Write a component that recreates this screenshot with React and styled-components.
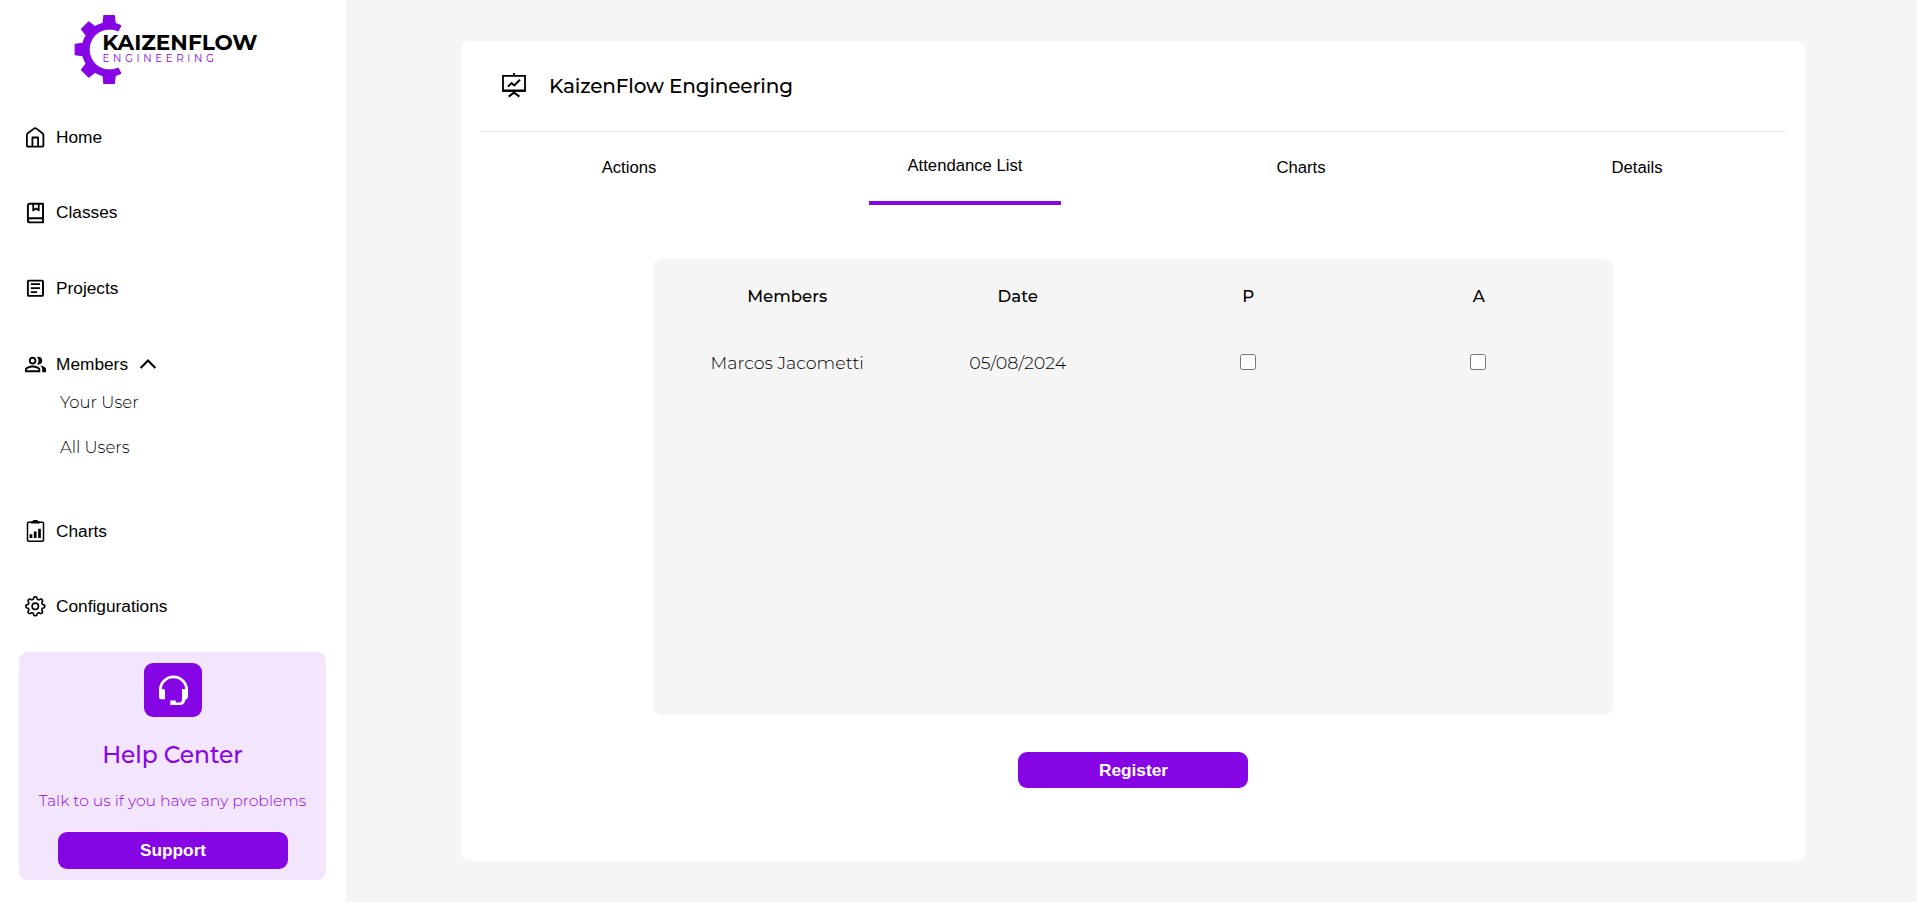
import React from "react";
import styled, { createGlobalStyle } from "styled-components";
import { MdOutlinePeopleAlt } from "react-icons/md";

const PURPLE = "#8605e5";
const LILAC = "#f3e5fc";
const GREY = "#f5f5f5";
const DISPLAY = `"Montserrat", "Inter", sans-serif`;

const GlobalStyle = createGlobalStyle`
  * { box-sizing: border-box; }
  body { margin: 0; background: ${GREY}; color: #000; font-family: "Liberation Sans", Arial, sans-serif; }
`;

const Page = styled.div`
  display: flex;
  width: 100%;
  height: 902px;
  overflow: hidden;
`;

const Sidebar = styled.aside`
  display: flex;
  flex-direction: column;
  flex: none;
  width: 346px;
  height: 100%;
  padding: 0 20px 22px 19px;
  background: #fff;
`;

const LogoSvg = styled.svg`
  display: block;
  flex: none;
  width: 200px;
  height: 90px;
  margin: 0 0 35px 51px;
`;

const LogoText = styled.text`
  font-family: ${DISPLAY};
  font-size: ${(p) => p.$size}px;
  font-weight: ${(p) => p.$weight};
  fill: ${(p) => p.$fill};
`;

const Nav = styled.nav`
  display: flex;
  flex-direction: column;
  padding-left: 5px;
`;

const NavRow = styled.a`
  display: flex;
  align-items: center;
  height: 24px;
  margin-bottom: ${(p) => p.$after}px;
  font-size: 17.3px;
  line-height: 24px;
`;

const NavLabel = styled.span`
  margin-left: 10px;
`;

const IconSvg = styled.svg`
  display: block;
  flex: none;
  fill: none;
  stroke: #000;
`;

const IconSlot = styled.span`
  display: flex;
  width: 22px;
  height: 24px;
  align-items: center;
  justify-content: center;
  svg { flex: none; }
`;

const ChevronSvg = styled(IconSvg)`
  margin-left: 11px;
`;

const SubMenu = styled.div`
  display: flex;
  flex-direction: column;
  gap: 21px;
  padding-left: 36px;
  margin-bottom: 60px;
`;

const SubItem = styled.a`
  font-family: ${DISPLAY};
  font-weight: 300;
  font-size: 16.5px;
  line-height: 24px;
`;

const HelpCard = styled.section`
  display: flex;
  flex-direction: column;
  align-items: center;
  width: 307px;
  height: 228px;
  margin-top: auto;
  padding-top: 11px;
  border-radius: 9px;
  background: ${LILAC};
  color: ${PURPLE};
  font-family: ${DISPLAY};
  white-space: nowrap;
`;

const HelpBadge = styled.div`
  width: 58px;
  height: 54px;
  border-radius: 9px;
  background: ${PURPLE};
`;

const HelpTitle = styled.h2`
  margin: 22px 0 0;
  font-size: 23.4px;
  font-weight: 500;
  line-height: 32px;
  letter-spacing: -0.1px;
`;

const HelpText = styled.p`
  margin: 18px 0 0;
  font-size: 15.6px;
  font-weight: 300;
  line-height: 24px;
`;

const Button = styled.button`
  width: 230px;
  height: ${(p) => p.$height}px;
  margin-top: ${(p) => p.$top}px;
  padding: 0 0 1px 1px;
  border: 0;
  border-radius: 9px;
  background: ${PURPLE};
  color: #fff;
  font: bold 17.3px/20px "Liberation Sans", Arial, sans-serif;
`;

const Main = styled.main`
  flex: 1;
  padding: 41px 112px 41px 115px;
`;

const Card = styled.section`
  display: flex;
  flex-direction: column;
  align-items: center;
  width: 1344px;
  height: 820px;
  border-radius: 9px;
  background: #fff;
`;

const CardHeader = styled.header`
  display: flex;
  align-items: center;
  width: 1306px;
  height: 91px;
  padding: 0 0 2px 21px;
  border-bottom: 1px solid ${LILAC};
`;

const CardTitle = styled.h1`
  margin: 0 0 0 22px;
  padding-top: 2px;
  font-family: ${DISPLAY};
  font-size: 20px;
  font-weight: 500;
  line-height: 28px;
  letter-spacing: -0.16px;
`;

const Tabs = styled.div`
  display: grid;
  grid-template-columns: repeat(4, 1fr);
  justify-items: center;
  width: 100%;
  height: 127px;
`;

const Tab = styled.button`
  width: 192px;
  height: 73px;
  padding: 0 0 2px;
  border: 0;
  border-bottom: ${(p) => (p.$active ? `4px solid ${PURPLE}` : "0")};
  background: none;
  color: #000;
  font: 16.7px/20px "Liberation Sans", Arial, sans-serif;
`;

const Table = styled.div`
  width: 960px;
  height: 456px;
  padding: 24px 19px;
  border-radius: 9px;
  background: ${GREY};
  font-family: ${DISPLAY};
`;

const TableRow = styled.div`
  display: grid;
  grid-template-columns: repeat(4, 1fr);
  justify-items: center;
  align-items: center;
  height: 26px;
  margin-bottom: 41px;
  font-size: ${(p) => (p.$head ? 16.6 : 17.5)}px;
  font-weight: ${(p) => (p.$head ? 500 : 300)};
`;

const Cell = styled.span`
  padding-bottom: ${(p) => (p.$raised ? 2 : 0)}px;
  white-space: nowrap;
`;

const Check = styled.input`
  width: 16px;
  height: 16px;
  margin: 0 1px 3px 0;
`;

const polar = (r, deg) => {
  const a = (deg * Math.PI) / 180;
  return [r * Math.sin(a), -r * Math.cos(a)];
};

const cogPath = () => {
  const pts = [];
  for (let d = 0; d < 360; d += 3) {
    const c = Math.cos((d * 8 * Math.PI) / 180);
    const r = 8.35 + 1.15 * Math.tanh(2 * c);
    const [x, y] = polar(r, d);
    pts.push(`${(11.3 + x).toFixed(2)} ${(12.3 + y).toFixed(2)}`);
  }
  return `M${pts.join("L")}Z`;
};

const Logo = () => (
  <LogoSvg viewBox="70 0 200 90">
    <g fill={PURPLE} stroke={PURPLE} strokeLinejoin="round">
      <path
        d="M121 25.6A26.8 26.8 0 1 0 121 73.4L118.2 68A20.4 20.4 0 1 1 118.2 31Z"
        strokeWidth="1"
      />
      {[0, -45, -90, -135, -180].map((deg) => (
        <path
          key={deg}
          d="M102.8 25L103.9 15.6H114.3L115.4 25Z"
          strokeWidth="1.2"
          transform={`rotate(${deg} 109.1 49.5)`}
        />
      ))}
    </g>
    <LogoText x="102.2" y="50.4" $size={21.6} $weight={700} $fill="#000" textLength="155.4" lengthAdjust="spacingAndGlyphs">
      KAIZENFLOW
    </LogoText>
    <LogoText x="102.4" y="62.3" $size={10.3} $weight={400} $fill={PURPLE} textLength="111.6">
      ENGINEERING
    </LogoText>
  </LogoSvg>
);

const Icon = ({ children, sw = 1.8 }) => (
  <IconSvg width="22" height="24" viewBox="0 0 22 24" strokeWidth={sw} strokeLinejoin="round">
    {children}
  </IconSvg>
);

const HomeIcon = () => (
  <Icon>
    <path d="M2.9 10.2Q2.9 9 3.8 8.3L10 3.6Q11.2 2.7 12.4 3.6L18.5 8.3Q19.4 9 19.4 10.2V20Q19.4 21.7 17.8 21.7H4.5Q2.9 21.7 2.9 20ZM8.4 21.7V12.5H14.1V21.7" />
  </Icon>
);

const BookIcon = () => (
  <Icon sw={1.9}>
    <path d="M6 3.7H19V22.4H6Q3.9 22.4 3.9 20.5V5.7Q3.9 3.7 6 3.7ZM4 20Q4.2 18.2 6 18.2H19" />
    <path d="M9.2 3.7V10.4L12 8.4L14.7 10.4V3.7" strokeWidth="1.8" />
  </Icon>
);

const ArticleIcon = () => (
  <Icon sw={1.9}>
    <path d="M4.9 4.6H18Q19 4.6 19 5.6V18.9Q19 19.9 18 19.9H4.9Q3.9 19.9 3.9 18.9V5.6Q3.9 4.6 4.9 4.6Z" />
    <path d="M6.8 8.2H16M6.8 12.2H16M6.8 16.2H13" strokeWidth="1.7" />
  </Icon>
);

const ReportIcon = () => (
  <Icon sw={1.5}>
    <rect x="3.5" y="3.3" width="16" height="19" rx="1.2" />
    <path d="M7 4.6V2.6L8.6 2L9.4 1H13.2L14 2L15.6 2.6V4.6Z" fill="#000" stroke="none" />
    <path d="M7 15.3V19M11.2 12.6V19M15.5 9.7V19" strokeWidth="2.7" />
  </Icon>
);

const CogIcon = () => (
  <Icon sw={1.6}>
    <path d={cogPath()} />
    <circle cx="11.3" cy="12.3" r="3.2" />
  </Icon>
);

const BoardIcon = () => (
  <IconSvg width="26" height="26" viewBox="0 0 26 26" strokeWidth="1.8">
    <path d="M2 3.9H24V18.9H2ZM13 1V4" />
    <path d="M1.2 18.6H24.8" strokeWidth="2.2" />
    <path d="M7 14.6L10.6 11.1L13.2 13.4L19 7.8M7.6 24.6L13 20.6L18.4 24.6" strokeWidth="2" />
  </IconSvg>
);

const HeadsetIcon = () => (
  <IconSvg width="58" height="54" viewBox="0 0 58 54">
    <path d="M16.3 28.5V27A13 13 0 0 1 42.7 27V28.5" stroke="#fff" strokeWidth="2.8" />
    <path
      d="M15 26H19.2Q21 26 21 27.8V36.3H17.6Q15 36.3 15 33.7ZM38 26H44V33.7Q44 35.6 42.4 36.3L41.4 36.7Q40.6 42 36 42H26.3V37.4H31.8V39.4H35.6Q37.9 39.4 38 36.3Z"
      fill="#fff"
      stroke="none"
    />
  </IconSvg>
);

export default function App() {
  return (
    <Page>
      <GlobalStyle />
      <Sidebar>
        <Logo />
        <Nav>
          <NavRow $after={51}><HomeIcon /><NavLabel>Home</NavLabel></NavRow>
          <NavRow $after={52}><BookIcon /><NavLabel>Classes</NavLabel></NavRow>
          <NavRow $after={52}><ArticleIcon /><NavLabel>Projects</NavLabel></NavRow>
          <NavRow $after={14}>
            <IconSlot><MdOutlinePeopleAlt size={23} /></IconSlot>
            <NavLabel>Members</NavLabel>
            <ChevronSvg width="18" height="12" viewBox="0 0 18 12" strokeWidth="2.1">
              <path d="M1.6 10L9 2.6L16.4 10" />
            </ChevronSvg>
          </NavRow>
          <SubMenu>
            <SubItem>Your User</SubItem>
            <SubItem>All Users</SubItem>
          </SubMenu>
          <NavRow $after={51}><ReportIcon /><NavLabel>Charts</NavLabel></NavRow>
          <NavRow $after={0}><CogIcon /><NavLabel>Configurations</NavLabel></NavRow>
        </Nav>
        <HelpCard>
          <HelpBadge><HeadsetIcon /></HelpBadge>
          <HelpTitle>Help Center</HelpTitle>
          <HelpText>Talk to us if you have any problems</HelpText>
          <Button $height={37} $top={19}>Support</Button>
        </HelpCard>
      </Sidebar>
      <Main>
        <Card>
          <CardHeader>
            <BoardIcon />
            <CardTitle>KaizenFlow Engineering</CardTitle>
          </CardHeader>
          <Tabs>
            <Tab>Actions</Tab>
            <Tab $active>Attendance List</Tab>
            <Tab>Charts</Tab>
            <Tab>Details</Tab>
          </Tabs>
          <Table>
            <TableRow $head>
              <Cell>Members</Cell>
              <Cell>Date</Cell>
              <Cell>P</Cell>
              <Cell>A</Cell>
            </TableRow>
            <TableRow>
              <Cell $raised>Marcos Jacometti</Cell>
              <Cell $raised>05/08/2024</Cell>
              <Check type="checkbox" />
              <Check type="checkbox" />
            </TableRow>
          </Table>
          <Button $height={36} $top={37}>Register</Button>
        </Card>
      </Main>
    </Page>
  );
}
